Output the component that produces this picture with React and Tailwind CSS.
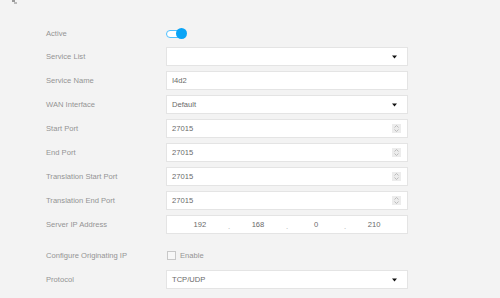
import React from "react";

const Caret = () => (
  <svg width="5" height="4" viewBox="0 0 5 4" className="shrink-0">
    <path d="M0 0.5 L5 0.5 L2.5 3.5 Z" fill="#111" />
  </svg>
);

const Spinner = () => (
  <div className="w-[9px] h-[9px] bg-[#ececec] flex flex-col items-center justify-center gap-[1px] shrink-0">
    <svg width="5" height="3" viewBox="0 0 5 3"><path d="M0.5 2.5 L2.5 0.5 L4.5 2.5" stroke="#b0b0b0" strokeWidth="0.8" fill="none" /></svg>
    <svg width="5" height="3" viewBox="0 0 5 3"><path d="M0.5 0.5 L2.5 2.5 L4.5 0.5" stroke="#b0b0b0" strokeWidth="0.8" fill="none" /></svg>
  </div>
);

const Label = ({ children }) => (
  <div className="w-[120px] shrink-0 text-[7.6px] text-[#949494]">{children}</div>
);

const Box = ({ children, className = "" }) => (
  <div className={"w-[242px] h-[19px] bg-white border border-[#e4e4e4] flex items-center px-[5px] text-[7.6px] text-[#6a6a6a] " + className}>
    {children}
  </div>
);

const Row = ({ label, children, className = "" }) => (
  <div className={"flex items-center h-[19px] " + className}>
    <Label>{label}</Label>
    {children}
  </div>
);

export default function App() {
  return (
    <div
      className="w-[500px] h-[298px] bg-[#f3f3f3] relative overflow-hidden"
      style={{ fontFamily: '"Liberation Sans", Arial, sans-serif' }}
    >
      <svg className="absolute left-[12px] top-0" width="5" height="4" viewBox="0 0 5 4">
        <rect x="0" y="0" width="3" height="2" fill="#999" />
        <rect x="2" y="2" width="3" height="2" fill="#bbb" />
      </svg>
      <div className="flex flex-col pl-[46px] pt-[24px]">
        <Row label="Active">
          <div className="relative w-[21px] h-[11px] flex items-center">
            <div className="w-[15px] h-[8px] rounded-full border border-[#4fc0ff] bg-white" />
            <div className="absolute right-0 w-[11px] h-[11px] rounded-full bg-[#0aa4f6]" />
          </div>
        </Row>
        <Row label="Service List" className="mt-[4px]">
          <Box className="justify-end pr-[10px]"><Caret /></Box>
        </Row>
        <Row label="Service Name" className="mt-[5px]">
          <Box>I4d2</Box>
        </Row>
        <Row label="WAN Interface" className="mt-[5px]">
          <Box className="justify-between pr-[10px]"><span>Default</span><Caret /></Box>
        </Row>
        <Row label="Start Port" className="mt-[5px]">
          <Box className="justify-between pr-[6px]"><span>27015</span><Spinner /></Box>
        </Row>
        <Row label="End Port" className="mt-[5px]">
          <Box className="justify-between pr-[6px]"><span>27015</span><Spinner /></Box>
        </Row>
        <Row label="Translation Start Port" className="mt-[5px]">
          <Box className="justify-between pr-[6px]"><span>27015</span><Spinner /></Box>
        </Row>
        <Row label="Translation End Port" className="mt-[5px]">
          <Box className="justify-between pr-[6px]"><span>27015</span><Spinner /></Box>
        </Row>
        <Row label="Server IP Address" className="mt-[5px]">
          <Box className="px-0">
            <div className="flex-1 text-center">192</div>
            <div className="self-end pb-[1px] text-[#aaa]">.</div>
            <div className="flex-1 text-center">168</div>
            <div className="self-end pb-[1px] text-[#aaa]">.</div>
            <div className="flex-1 text-center">0</div>
            <div className="self-end pb-[1px] text-[#aaa]">.</div>
            <div className="flex-1 text-center">210</div>
          </Box>
        </Row>
        <Row label="Configure Originating IP" className="mt-[12px]">
          <div className="flex items-center gap-[4px] pl-[1px]">
            <div className="w-[9px] h-[9px] border border-[#c8c8c8] bg-[#f7f7f7]" />
            <span className="text-[7.6px] text-[#949494]">Enable</span>
          </div>
        </Row>
        <Row label="Protocol" className="mt-[5px]">
          <Box className="justify-between pr-[10px]"><span>TCP/UDP</span><Caret /></Box>
        </Row>
      </div>
    </div>
  );
}
